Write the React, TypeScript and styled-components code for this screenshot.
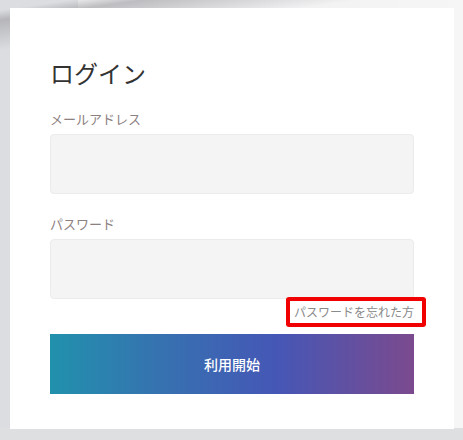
import styled, { createGlobalStyle } from "styled-components";

const GlobalStyle = createGlobalStyle`
  html, body {
    margin: 0;
    padding: 0;
  }
  body {
    font-family: "Noto Sans CJK JP", "Noto Sans", sans-serif;
    background: #f0f0f1;
  }
`;

export default function App() {
  return (
    <>
      <GlobalStyle />
      <Page>
        <Card>
          <Title>ログイン</Title>
          <Field>
            <Label>メールアドレス</Label>
            <Input type="email" />
          </Field>
          <Field>
            <Label>パスワード</Label>
            <Input type="password" />
          </Field>
          <ForgotRow>
            <ForgotLink href="#">パスワードを忘れた方</ForgotLink>
          </ForgotRow>
          <SubmitButton>利用開始</SubmitButton>
        </Card>
      </Page>
    </>
  );
}

const Page = styled.div`
  width: 463px;
  height: 440px;
  box-sizing: border-box;
  padding: 8px 0 0 10px;
  overflow: hidden;
  background:
    linear-gradient(172deg, transparent 2%, rgba(150, 150, 155, 0.55) 4%, transparent 10%),
    linear-gradient(0deg, #dedfe1 0px, #dedfe1 12px, transparent 12px),
    linear-gradient(90deg, #dcdde0 0px, #dcdde0 78px, #ececee 78px, #f6f6f7 100%);
`;

const Card = styled.div`
  width: 444px;
  height: 421px;
  box-sizing: border-box;
  background: #ffffff;
  padding: 49px 40px 0;
  display: flex;
  flex-direction: column;
`;

const Title = styled.h1`
  margin: 0 0 20px;
  font-size: 24px;
  line-height: 32px;
  font-weight: 400;
  color: #333333;
`;

const Field = styled.div`
  display: flex;
  flex-direction: column;
  gap: 5px;

  & + & {
    margin-top: 20px;
  }
`;

const Label = styled.label`
  font-size: 13px;
  line-height: 20px;
  color: #8c8080;
`;

const Input = styled.input`
  height: 60px;
  box-sizing: border-box;
  border: 1px solid #ebebeb;
  border-radius: 4px;
  background: #f4f4f4;
  outline: none;
  padding: 0 12px;
  font-size: 14px;
`;

const ForgotRow = styled.div`
  display: flex;
  justify-content: flex-end;
  margin-top: -2px;
  margin-right: -12px;
`;

const ForgotLink = styled.a`
  display: block;
  border: 4px solid #f00000;
  border-radius: 3px;
  padding: 0 8px 0 4px;
  font-size: 12px;
  line-height: 22px;
  color: #8a8a8a;
  text-decoration: none;
`;

const SubmitButton = styled.button`
  margin-top: 7px;
  height: 60px;
  border: none;
  background: linear-gradient(90deg, #2191ad 0%, #3672b0 30%, #4557b6 62%, #7b4a8e 100%);
  color: #ffffff;
  font-family: "Noto Sans CJK JP", "Noto Sans", sans-serif;
  font-size: 14px;
  font-weight: 500;
  cursor: pointer;
`;
